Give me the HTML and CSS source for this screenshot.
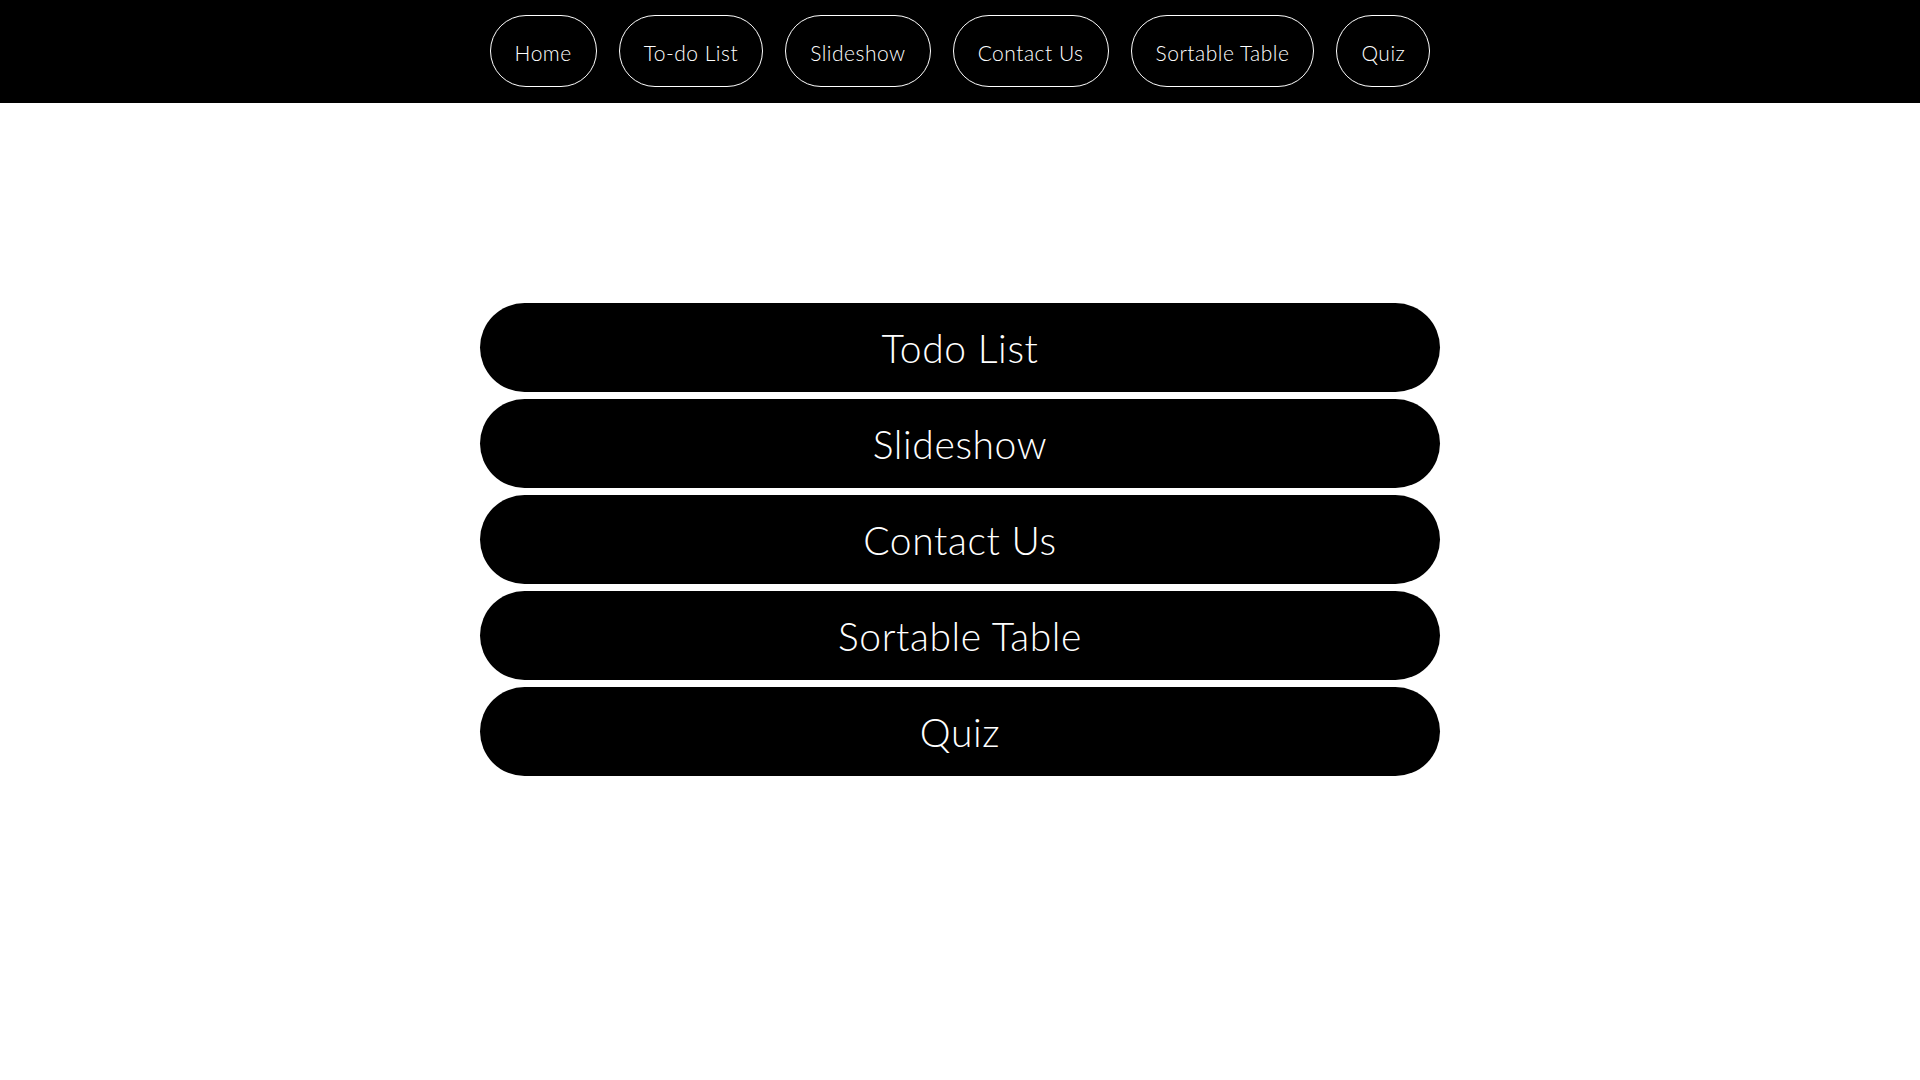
FILE: index.html
```html
<!DOCTYPE html>
<html lang="en">
<head>
<meta charset="utf-8">
<title>Home</title>
<link rel="stylesheet" href="styles.css">
</head>
<body>
<nav class="topnav">
  <a class="nav-btn" href="#">Home</a>
  <a class="nav-btn" href="#">To-do List</a>
  <a class="nav-btn" href="#">Slideshow</a>
  <a class="nav-btn" href="#">Contact Us</a>
  <a class="nav-btn" href="#">Sortable Table</a>
  <a class="nav-btn" href="#">Quiz</a>
</nav>
<main class="menu">
  <a class="menu-btn" href="#">Todo List</a>
  <a class="menu-btn" href="#">Slideshow</a>
  <a class="menu-btn" href="#">Contact Us</a>
  <a class="menu-btn" href="#">Sortable Table</a>
  <a class="menu-btn" href="#">Quiz</a>
</main>
</body>
</html>
```
FILE: styles.css
```css
html, body {
  margin: 0;
  padding: 0;
  background: #fff;
  font-family: "Lato", "Open Sans", sans-serif;
  font-weight: 300;
}

.topnav {
  background: #000;
  display: flex;
  justify-content: center;
  gap: 22px;
  padding: 15px 0 16px;
}

.nav-btn {
  display: inline-flex;
  align-items: center;
  justify-content: center;
  box-sizing: border-box;
  height: 72px;
  padding: 2px 24px 0;
  border: 1px solid #fff;
  border-radius: 36px;
  color: #fff;
  text-decoration: none;
  font-size: 21px;
  letter-spacing: 0.5px;
}

.menu {
  width: 960px;
  margin: 200px auto 0;
  display: flex;
  flex-direction: column;
  gap: 7px;
}

.menu-btn {
  display: flex;
  align-items: center;
  justify-content: center;
  height: 89px;
  background: #000;
  color: #fff;
  border-radius: 45px;
  text-decoration: none;
  font-size: 39px;
  letter-spacing: 0.6px;
}
```
